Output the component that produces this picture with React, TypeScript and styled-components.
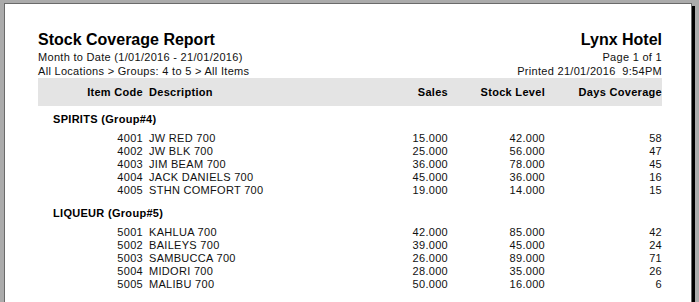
import styled, { createGlobalStyle } from 'styled-components';

interface Item {
  code: string;
  description: string;
  sales: string;
  stock: string;
  days: string;
}

interface Group {
  title: string;
  items: Item[];
}

const groups: Group[] = [
  {
    title: 'SPIRITS (Group#4)',
    items: [
      { code: '4001', description: 'JW RED 700', sales: '15.000', stock: '42.000', days: '58' },
      { code: '4002', description: 'JW BLK 700', sales: '25.000', stock: '56.000', days: '47' },
      { code: '4003', description: 'JIM BEAM 700', sales: '36.000', stock: '78.000', days: '45' },
      { code: '4004', description: 'JACK DANIELS 700', sales: '45.000', stock: '36.000', days: '16' },
      { code: '4005', description: 'STHN COMFORT 700', sales: '19.000', stock: '14.000', days: '15' },
    ],
  },
  {
    title: 'LIQUEUR (Group#5)',
    items: [
      { code: '5001', description: 'KAHLUA 700', sales: '42.000', stock: '85.000', days: '42' },
      { code: '5002', description: 'BAILEYS 700', sales: '39.000', stock: '45.000', days: '24' },
      { code: '5003', description: 'SAMBUCCA 700', sales: '26.000', stock: '89.000', days: '71' },
      { code: '5004', description: 'MIDORI 700', sales: '28.000', stock: '35.000', days: '26' },
      { code: '5005', description: 'MALIBU 700', sales: '50.000', stock: '16.000', days: '6' },
    ],
  },
];

const App = () => {
  return (
    <>
      <GlobalStyle />
      <Page>
        <ReportHeader>
          <HeaderColumn>
            <Title>Stock Coverage Report</Title>
            <SubLine>Month to Date (1/01/2016 - 21/01/2016)</SubLine>
            <SubLine>All Locations &gt; Groups: 4 to 5 &gt; All Items</SubLine>
          </HeaderColumn>
          <HeaderColumn $right>
            <Title>Lynx Hotel</Title>
            <SubLine>Page 1 of 1</SubLine>
            <SubLine>Printed 21/01/2016  9:54PM</SubLine>
          </HeaderColumn>
        </ReportHeader>

        <ColumnBar>
          <Cell $align="right">Item Code</Cell>
          <Cell $pad>Description</Cell>
          <Cell $align="right">Sales</Cell>
          <Cell $align="right">Stock Level</Cell>
          <Cell $align="right">Days Coverage</Cell>
        </ColumnBar>

        <Body>
          {groups.map((group) => (
            <section key={group.title}>
              <GroupTitle>{group.title}</GroupTitle>
              {group.items.map((item) => (
                <Row key={item.code}>
                  <Cell $align="right">{item.code}</Cell>
                  <Cell $pad>{item.description}</Cell>
                  <Cell $align="right">{item.sales}</Cell>
                  <Cell $align="right">{item.stock}</Cell>
                  <Cell $align="right">{item.days}</Cell>
                </Row>
              ))}
            </section>
          ))}
        </Body>
      </Page>
    </>
  );
};

export default App;

const GlobalStyle = createGlobalStyle`
  html, body {
    margin: 0;
    padding: 0;
    overflow: hidden;
  }
  body {
    background: #ababab;
    font-family: 'Liberation Sans', Arial, sans-serif;
    color: #111;
  }
`;

const Page = styled.div`
  box-sizing: border-box;
  width: 688px;
  min-height: 340px;
  margin: 3px 0 0 4px;
  padding: 26px 29px 0 33px;
  background: #fff;
  border: 1px solid #6a6a6a;
  box-shadow: 3px 3px 0 #000;
`;

const ReportHeader = styled.header`
  display: flex;
  justify-content: space-between;
`;

const HeaderColumn = styled.div<{ $right?: boolean }>`
  display: flex;
  flex-direction: column;
  align-items: ${(p) => (p.$right ? 'flex-end' : 'flex-start')};
`;

const Title = styled.h1`
  margin: 0;
  font-size: 16px;
  line-height: 20px;
  font-weight: bold;
  color: #000;
`;

const SubLine = styled.div`
  font-size: 11px;
  line-height: 14px;
  letter-spacing: 0.3px;
  white-space: pre;
`;

const grid = `
  display: grid;
  grid-template-columns: 105px 1fr 97px 97px 117px;
  font-size: 11px;
  letter-spacing: 0.3px;
  white-space: pre;
`;

const ColumnBar = styled.div`
  ${grid}
  height: 28px;
  align-items: center;
  background: #e4e4e4;
  font-weight: bold;
  color: #000;
`;

const Cell = styled.div<{ $align?: 'left' | 'right'; $pad?: boolean }>`
  text-align: ${(p) => p.$align ?? 'left'};
  padding-left: ${(p) => (p.$pad ? '6px' : '0')};
`;

const Body = styled.div`
  display: flex;
  flex-direction: column;
  gap: 9px;
  padding-top: 6px;
`;

const GroupTitle = styled.div`
  padding-left: 15px;
  margin-bottom: 6px;
  font-size: 11px;
  line-height: 14px;
  font-weight: bold;
  letter-spacing: 0.3px;
  color: #000;
`;

const Row = styled.div`
  ${grid}
  line-height: 13px;
`;
